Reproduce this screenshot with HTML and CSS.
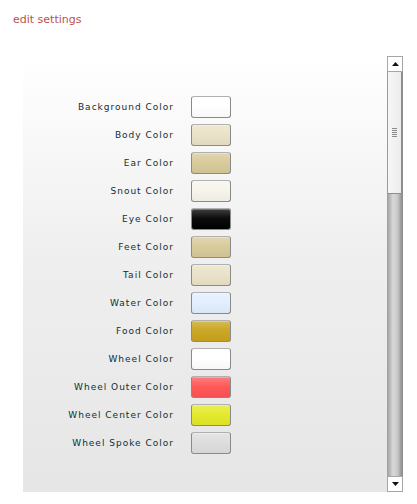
FILE: index.html
```html
<!DOCTYPE html>
<html>
<head>
<meta charset="utf-8">
<link rel="stylesheet" href="styles.css">
</head>
<body>
<div class="title">edit settings</div>
<div class="panel">
  <div class="content">
    <div class="row"><span class="label">Background Color</span><span class="swatch" style="background-color:#ffffff"></span></div>
    <div class="row"><span class="label">Body Color</span><span class="swatch" style="background-color:#e9e1c6"></span></div>
    <div class="row"><span class="label">Ear Color</span><span class="swatch" style="background-color:#d6c997"></span></div>
    <div class="row"><span class="label">Snout Color</span><span class="swatch" style="background-color:#f6f4ea"></span></div>
    <div class="row"><span class="label">Eye Color</span><span class="swatch" style="background-color:#000000"></span></div>
    <div class="row"><span class="label">Feet Color</span><span class="swatch" style="background-color:#d6c997"></span></div>
    <div class="row"><span class="label">Tail Color</span><span class="swatch" style="background-color:#e9e1c6"></span></div>
    <div class="row"><span class="label">Water Color</span><span class="swatch" style="background-color:#e1eeff"></span></div>
    <div class="row"><span class="label">Food Color</span><span class="swatch" style="background-color:#c9a31c"></span></div>
    <div class="row"><span class="label">Wheel Color</span><span class="swatch" style="background-color:#ffffff"></span></div>
    <div class="row"><span class="label">Wheel Outer Color</span><span class="swatch" style="background-color:#ff5252"></span></div>
    <div class="row"><span class="label">Wheel Center Color</span><span class="swatch" style="background-color:#e3e824"></span></div>
    <div class="row"><span class="label">Wheel Spoke Color</span><span class="swatch" style="background-color:#dcdcdc"></span></div>
  </div>
  <div class="scrollbar">
    <div class="btn"><svg width="7" height="4" viewBox="0 0 7 4"><path d="M3.5 0 L7 4 L0 4 Z" fill="#111"/></svg></div>
    <div class="thumb"><span class="grip"></span></div>
    <div class="track"></div>
    <div class="btn"><svg width="7" height="4" viewBox="0 0 7 4"><path d="M0 0 L7 0 L3.5 4 Z" fill="#111"/></svg></div>
  </div>
</div>
</body>
</html>
```
FILE: styles.css
```css
html, body {
  margin: 0;
  padding: 0;
  background: #ffffff;
}
body {
  width: 417px;
  height: 504px;
  overflow: hidden;
}
.title {
  font-family: "DejaVu Sans", Verdana, sans-serif;
  font-size: 11px;
  color: #c0504d;
  padding: 12px 0 0 13px;
  height: 15px;
  line-height: 15px;
}
.panel {
  margin: 29px 0 0 23px;
  width: 380px;
  height: 436px;
  display: flex;
  background: linear-gradient(to bottom, #ffffff 0%, #efefef 45%, #e6e6e6 100%);
}
.content {
  flex: 1;
  padding-top: 40px;
  display: flex;
  flex-direction: column;
  gap: 6px;
}
.row {
  display: flex;
  align-items: center;
  height: 22px;
}
.label {
  width: 151px;
  text-align: right;
  font-family: "DejaVu Sans", Verdana, sans-serif;
  font-size: 9px;
  letter-spacing: 1px;
  color: #0f2f33;
  margin-right: 17px;
}
.swatch {
  width: 38px;
  height: 20px;
  border: 1px solid #8a8a8a;
  border-top-color: #b0b0b0;
  border-radius: 3px;
  background-image: linear-gradient(to bottom, rgba(255,255,255,0.25) 0%, rgba(255,255,255,0.05) 45%, rgba(0,0,0,0.03) 100%);
  box-shadow: inset 0 1px 0 rgba(255,255,255,0.3);
}
.scrollbar {
  width: 16px;
  display: flex;
  flex-direction: column;
}
.btn {
  height: 15px;
  border: 1px solid #a6a6a6;
  box-sizing: border-box;
  height: 16px;
  background: #ffffff;
  display: flex;
  align-items: center;
  justify-content: center;
}
.thumb {
  height: 122px;
  box-sizing: border-box;
  border-left: 1px solid #9a9a9a;
  border-right: 2px solid #8e8e8e;
  border-bottom: 1px solid #8e8e8e;
  background: linear-gradient(to right, #f6f6f6, #ececec);
  display: flex;
  align-items: center;
  justify-content: center;
}
.grip {
  width: 5px;
  height: 9px;
  background: repeating-linear-gradient(to bottom, #8a8a8a 0, #8a8a8a 1px, transparent 1px, transparent 2px);
}
.track {
  flex: 1;
  box-sizing: border-box;
  border-right: 1px solid #8e8e8e;
  background: linear-gradient(to right, #9c9c9c 0%, #d8d8d8 40%, #c8c8c8 70%, #8f8f8f 100%);
}
```
